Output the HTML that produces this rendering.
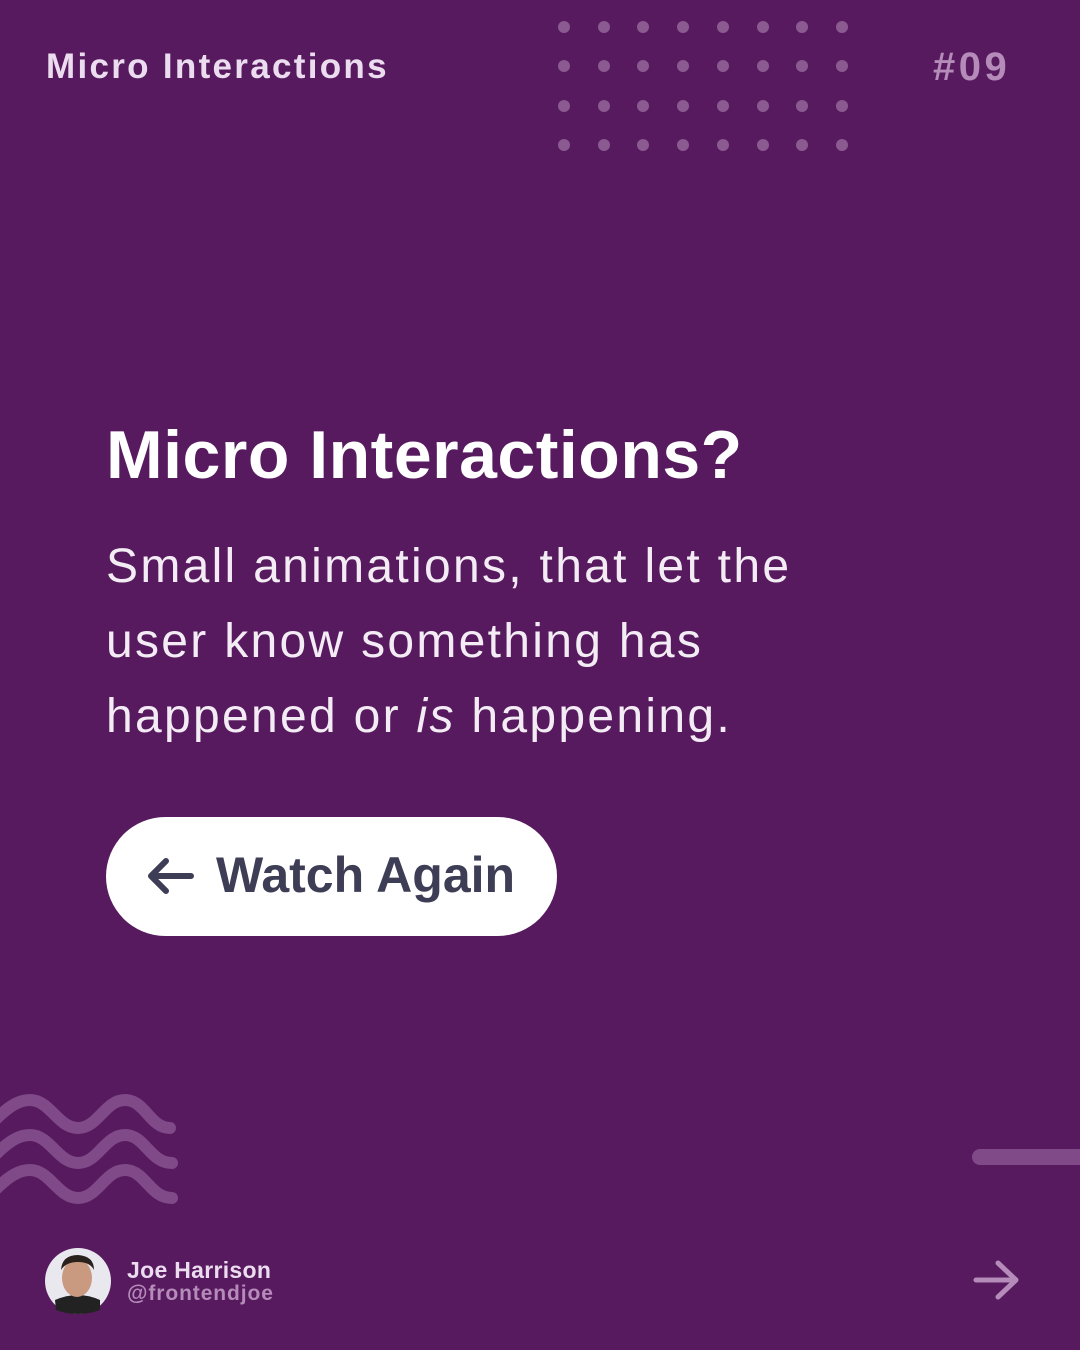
<!DOCTYPE html>
<html><head><meta charset="utf-8"><style>
html,body{margin:0;padding:0}
body{width:1080px;height:1350px;background:#571a5f;position:relative;overflow:hidden;font-family:"Liberation Sans",sans-serif;color:#fff}
.a{position:absolute;white-space:nowrap}
</style></head><body>
<div class="a" style="left:46px;top:47px;font-size:35px;font-weight:bold;color:#ecdcef;letter-spacing:2.3px">Micro Interactions</div>
<div class="a" style="left:933px;top:45px;font-size:40px;font-weight:bold;color:#b58bb9;letter-spacing:3.5px">#09</div>
<svg class="a" style="left:0;top:0" width="1080" height="1350">
<g fill="#8a5a90">
<circle cx="564" cy="27" r="6"/><circle cx="604" cy="27" r="6"/><circle cx="643" cy="27" r="6"/><circle cx="683" cy="27" r="6"/><circle cx="723" cy="27" r="6"/><circle cx="763" cy="27" r="6"/><circle cx="802" cy="27" r="6"/><circle cx="842" cy="27" r="6"/>
<circle cx="564" cy="66" r="6"/><circle cx="604" cy="66" r="6"/><circle cx="643" cy="66" r="6"/><circle cx="683" cy="66" r="6"/><circle cx="723" cy="66" r="6"/><circle cx="763" cy="66" r="6"/><circle cx="802" cy="66" r="6"/><circle cx="842" cy="66" r="6"/>
<circle cx="564" cy="106" r="6"/><circle cx="604" cy="106" r="6"/><circle cx="643" cy="106" r="6"/><circle cx="683" cy="106" r="6"/><circle cx="723" cy="106" r="6"/><circle cx="763" cy="106" r="6"/><circle cx="802" cy="106" r="6"/><circle cx="842" cy="106" r="6"/>
<circle cx="564" cy="145" r="6"/><circle cx="604" cy="145" r="6"/><circle cx="643" cy="145" r="6"/><circle cx="683" cy="145" r="6"/><circle cx="723" cy="145" r="6"/><circle cx="763" cy="145" r="6"/><circle cx="802" cy="145" r="6"/><circle cx="842" cy="145" r="6"/>
</g>
<g fill="none" stroke="#7f4a87" stroke-width="12" stroke-linecap="round">
<path d="M-5 1120 C10 1105 20 1100 30 1100 C50 1100 58 1128 78 1128 C98 1128 105 1100 125 1100 C145 1100 150 1128 170 1128"/>
<path d="M-5 1155 C10 1140 20 1135 30 1135 C50 1135 58 1163 78 1163 C98 1163 105 1135 125 1135 C145 1135 150 1163 172 1163"/>
<path d="M-5 1190 C10 1175 20 1170 30 1170 C50 1170 58 1198 78 1198 C98 1198 105 1170 125 1170 C145 1170 150 1198 172 1198"/>
</g>
<rect x="972" y="1149" width="120" height="16" rx="8" fill="#7f4a87"/>
<g fill="none" stroke="#b58bb9" stroke-width="5" stroke-linecap="round" stroke-linejoin="round">
<path d="M976 1280 H1015 M998 1263 L1016 1280 L998 1297"/>
</g>
<circle cx="78" cy="1281" r="33" fill="#e9e8ef"/>
<path d="M55 1300 Q78 1290 100 1300 L100 1310 Q78 1318 56 1310Z" fill="#222"/>
<ellipse cx="77" cy="1278" rx="15" ry="19" fill="#c99a80"/>
<path d="M61 1270 Q62 1255 78 1255 Q94 1256 94 1270 Q90 1262 78 1262 Q66 1262 61 1270Z" fill="#2b211c"/>
</svg>
<div class="a" style="left:106px;top:416px;font-size:68px;font-weight:bold;letter-spacing:0.5px">Micro Interactions?</div>
<div class="a" style="left:106px;top:529px;font-size:48px;line-height:75px;color:#f3ecf4;letter-spacing:2.3px">Small animations, that let the<br>user know something has<br>happened or <i>is</i> happening.</div>
<div class="a" style="left:106px;top:817px;width:451px;height:119px;border-radius:60px;background:#fff"></div>
<svg class="a" style="left:145px;top:855px" width="52" height="42"><path d="M46 21 H6 M21 6 L6 21 L21 36" fill="none" stroke="#3d3d56" stroke-width="6" stroke-linecap="round" stroke-linejoin="round"/></svg>
<div class="a" style="left:216px;top:846px;font-size:50px;font-weight:bold;color:#3d3d56">Watch Again</div>
<div class="a" style="left:127px;top:1257px;font-size:23px;font-weight:bold;color:#ecdcef;letter-spacing:0.3px">Joe Harrison</div>
<div class="a" style="left:127px;top:1282px;font-size:21px;font-weight:bold;color:#b58bb9;letter-spacing:0.9px">@frontendjoe</div>
</body></html>
